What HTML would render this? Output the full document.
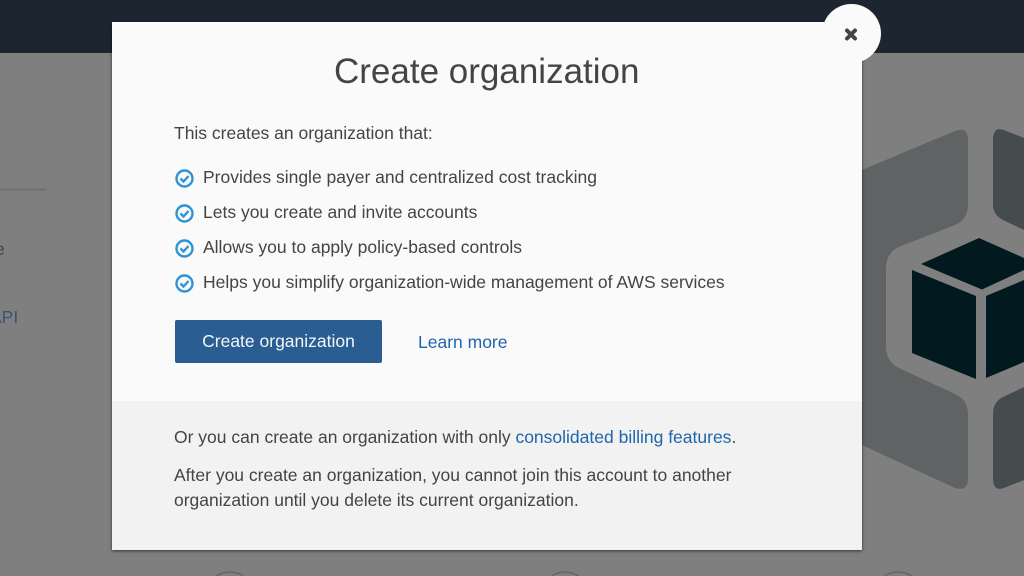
<!DOCTYPE html>
<html><head><meta charset="utf-8"><style>
html,body{margin:0;padding:0;width:1024px;height:576px;overflow:hidden;background:#7f7f7f;font-family:"Liberation Sans",sans-serif;color:#444;font-size:17.5px}
body{position:relative}
.t{position:absolute;white-space:nowrap;line-height:24px}
a{color:#1f65ad;text-decoration:none}
.ic{position:absolute;left:175px;width:19px;height:19px}
</style></head><body>
<div style="position:absolute;left:0;top:0;width:1024px;height:53px;background:#1c2530"></div>
<svg style="position:absolute;left:0;top:0" width="1024" height="576">
<path d="M862 170L955 131Q968 126 968 140V205Q968 219 955 225L901 246Q886 252 886 268V347Q886 362 901 369L955 394Q968 400 968 414V478Q968 492 955 488L862 445Z" fill="#5f6363"/>
<path d="M1024 138L1004 130Q993 126 993 140V205Q993 215 1003 220L1024 230Z" fill="#454c4d"/>
<path d="M1024 387L1003 397Q993 402 993 414V478Q993 492 1004 488L1024 480Z" fill="#454c4d"/>
<path d="M921 264L979 238L1024 258V270L982 289.500Z" fill="#021a1f"/>
<path d="M912 270L976 296V379L912 353Z" fill="#021a1f"/>
<path d="M986 296L1024 280V362L986 378Z" fill="#021a1f"/>
<rect x="0" y="188" width="46" height="3" fill="#747474"/>
<path d="M216.400 576A25 25 0 0 1 243.600 576" fill="none" stroke="#666" stroke-width="1.500"/>
<path d="M551.400 576A25 25 0 0 1 578.600 576" fill="none" stroke="#666" stroke-width="1.500"/>
<path d="M884.400 576A25 25 0 0 1 911.600 576" fill="none" stroke="#666" stroke-width="1.500"/>
</svg>
<div class="t" style="left:-5px;top:237px;color:#444">e</div>
<div class="t" style="left:-10px;top:305px;color:#3c5378">API</div>
<div style="position:absolute;left:112px;top:22px;width:750px;height:528px;background:#fafafa;box-shadow:0 1px 3px rgba(0,0,0,.6)"></div>
<div style="position:absolute;left:112px;top:401px;width:750px;height:149px;background:#f2f2f2"></div>
<div style="position:absolute;left:821.500px;top:3.500px;width:59px;height:59px;border-radius:50%;background:#fafafa"></div>
<svg style="position:absolute;left:843px;top:27px" width="16" height="16"><path d="M4 3.500L12 11.500M12 3.500L4 11.500" stroke="#444" stroke-width="4" stroke-linecap="round" fill="none"/></svg>
<div class="t" style="left:334px;top:52px;font-size:35px;line-height:40px">Create organization</div>
<div class="t" style="left:174px;top:121px">This creates an organization that:</div>
<svg class="ic" style="top:169px" viewBox="0 0 19 19"><circle cx="9.500" cy="9.500" r="8" fill="none" stroke="#2f93d6" stroke-width="2.400"/><path d="M5.500 9.500L8.500 12.500L13.500 7" fill="none" stroke="#2f93d6" stroke-width="2.400"/></svg>
<div class="t" style="left:203px;top:165px">Provides single payer and centralized cost tracking</div>
<svg class="ic" style="top:204px" viewBox="0 0 19 19"><circle cx="9.500" cy="9.500" r="8" fill="none" stroke="#2f93d6" stroke-width="2.400"/><path d="M5.500 9.500L8.500 12.500L13.500 7" fill="none" stroke="#2f93d6" stroke-width="2.400"/></svg>
<div class="t" style="left:203px;top:200px">Lets you create and invite accounts</div>
<svg class="ic" style="top:239px" viewBox="0 0 19 19"><circle cx="9.500" cy="9.500" r="8" fill="none" stroke="#2f93d6" stroke-width="2.400"/><path d="M5.500 9.500L8.500 12.500L13.500 7" fill="none" stroke="#2f93d6" stroke-width="2.400"/></svg>
<div class="t" style="left:203px;top:235px">Allows you to apply policy-based controls</div>
<svg class="ic" style="top:274px" viewBox="0 0 19 19"><circle cx="9.500" cy="9.500" r="8" fill="none" stroke="#2f93d6" stroke-width="2.400"/><path d="M5.500 9.500L8.500 12.500L13.500 7" fill="none" stroke="#2f93d6" stroke-width="2.400"/></svg>
<div class="t" style="left:203px;top:270px">Helps you simplify organization-wide management of AWS services</div>
<div style="position:absolute;left:175px;top:320px;width:207px;height:43px;background:#2a5d92;border-radius:2px;color:#f2f5f8;text-align:center;line-height:43px">Create organization</div>
<a class="t" style="left:418px;top:330px">Learn more</a>
<div class="t" style="left:174px;top:425px">Or you can create an organization with only <a>consolidated billing features</a>.</div>
<div class="t" style="left:174px;top:463px;line-height:25px">After you create an organization, you cannot join this account to another<br>organization until you delete its current organization.</div>
</body></html>
